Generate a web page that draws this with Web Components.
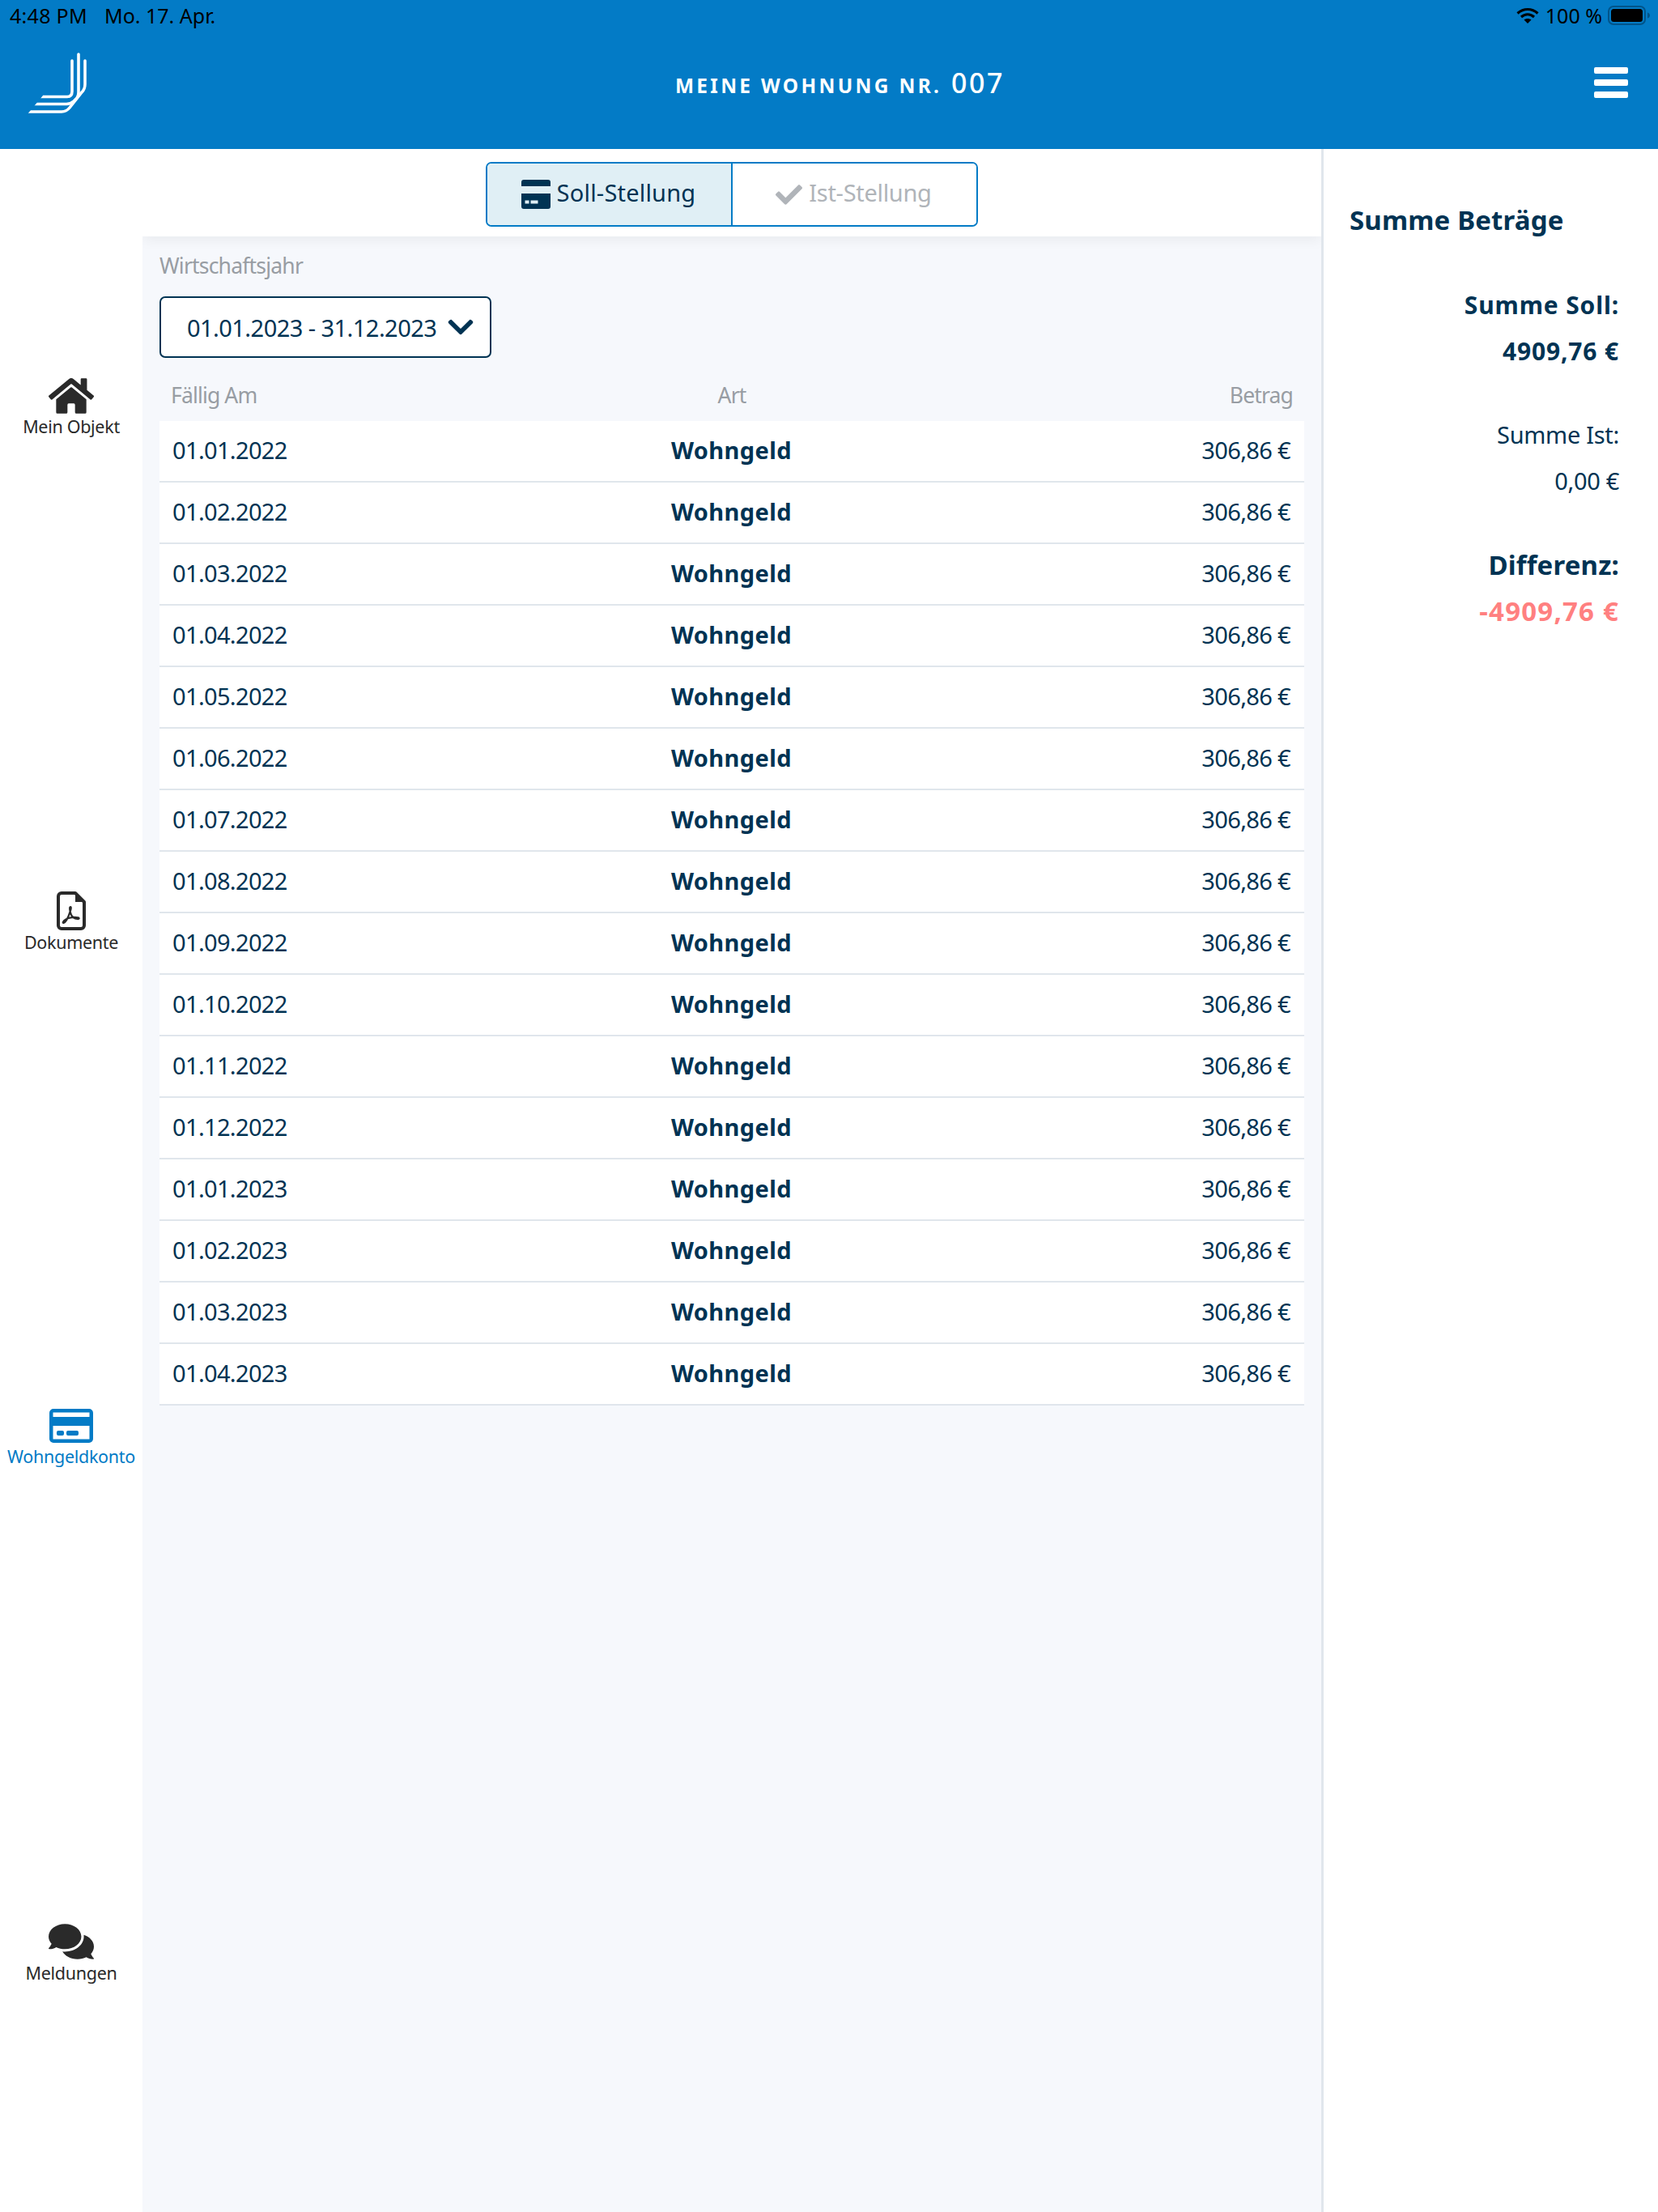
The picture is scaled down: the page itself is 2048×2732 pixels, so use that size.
<!DOCTYPE html>
<html lang="de">
<head>
<meta charset="utf-8">
<title>Meine Wohnung</title>
<style>
    html, body { margin: 0; padding: 0; }
    body {
        color: #003353;
        font-family: "Noto Sans", "Open Sans", sans-serif;
        height: 2732px;
        overflow: hidden;
        width: 2048px;
    }
</style>
</head>
<body>
<app-shell></app-shell>

<script>
const icons = {
    home: `<svg viewBox="0 0 576 512" width="56" height="50"><path fill="currentColor" d="M280.37 148.26L96 300.11V464a16 16 0 0 0 16 16l112.06-.29a16 16 0 0 0 15.92-16V368a16 16 0 0 1 16-16h64a16 16 0 0 1 16 16v95.64a16 16 0 0 0 16 16.05L464 480a16 16 0 0 0 16-16V300L295.67 148.26a12.19 12.19 0 0 0-15.3 0zM571.6 251.47L488 182.56V44.05a12 12 0 0 0-12-12h-56a12 12 0 0 0-12 12v72.61L318.47 43a48 48 0 0 0-61 0L4.34 251.47a12 12 0 0 0-1.6 16.9l25.5 31A12 12 0 0 0 45.15 301l235.22-193.74a12.19 12.19 0 0 1 15.3 0L530.9 301a12 12 0 0 0 16.9-1.6l25.5-31a12 12 0 0 0-1.7-16.93z"/></svg>`,
    pdf: `<svg viewBox="0 0 36 48" width="36" height="48"><path fill="none" stroke="currentColor" stroke-width="4" stroke-linejoin="round" d="M6 2h17l11 11v29a4 4 0 0 1-4 4H6a4 4 0 0 1-4-4V6a4 4 0 0 1 4-4z"/><path fill="currentColor" d="M23 2l11 11H23z"/><path fill="none" stroke="currentColor" stroke-width="2.2" stroke-linejoin="round" d="M17 19c-1.4 0-1 5 .8 9.500 1.500 3.500 3.600 5 7.700 5.500 2.300.3 3-1 1-1.600-4-1.100-11.300-.6-15.500 2.200-3.700 2.500-3.800 4.600-2.500 4.300 2.300-.6 5.800-6.600 8.100-14.200C17.600 22.500 18.300 19 17 19z"/></svg>`,
    card: `<svg viewBox="0 0 54 42" width="54" height="42"><path fill="currentColor" fill-rule="evenodd" d="M5 0h44a5 5 0 0 1 5 5v32a5 5 0 0 1-5 5H5a5 5 0 0 1-5-5V5a5 5 0 0 1 5-5zM4.500 4.500v5.500h45V4.500zM4.500 21v16.500h45V21z"/><rect fill="currentColor" x="9" y="27" width="9" height="6" rx="2"/><rect fill="currentColor" x="21" y="27" width="15" height="6" rx="2"/></svg>`,
    cardSolid: `<svg viewBox="0 0 36 36" width="36" height="36"><path fill="currentColor" fill-rule="evenodd" d="M3 0h30a3 3 0 0 1 3 3v5H0V3a3 3 0 0 1 3-3zM0 17h36v16a3 3 0 0 1-3 3H3a3 3 0 0 1-3-3zM4.500 25.500v4h5v-4zM11.500 25.500v4h9v-4z"/></svg>`,
    comments: `<svg viewBox="0 32 576 448" width="56" height="44"><path fill="currentColor" d="M416 192c0-88.400-93.100-160-208-160S0 103.600 0 192c0 34.300 14.100 65.900 38 92-13.400 30.200-35.500 54.200-35.800 54.500-2.200 2.300-2.800 5.700-1.500 8.700S4.800 352 8 352c36.600 0 66.900-12.300 88.700-25 32.200 15.700 70.300 25 111.300 25 114.900 0 208-71.600 208-160zm122 220c23.900-26 38-57.700 38-92 0-66.900-53.500-124.200-129.300-148.100.9 6.600 1.300 13.300 1.300 20.100 0 105.900-107.700 192-240 192-10.800 0-21.300-.8-31.700-1.900C207.800 439.600 281.800 480 368 480c41 0 79.100-9.200 111.300-25 21.800 12.700 52.100 25 88.700 25 3.200 0 6.100-1.900 7.300-4.800 1.300-2.900.7-6.300-1.500-8.700-.3-.3-22.400-24.200-35.800-54.500z"/></svg>`,
    check: `<svg viewBox="0 0 512 512" width="33" height="33"><path fill="currentColor" d="M173.898 439.404l-166.400-166.400c-9.997-9.997-9.997-26.206 0-36.204l36.203-36.204c9.997-9.998 26.207-9.998 36.204 0L192 312.690 432.095 72.596c9.997-9.997 26.207-9.997 36.204 0l36.203 36.204c9.997 9.997 9.997 26.206 0 36.204l-294.400 294.401c-9.998 9.997-26.207 9.997-36.204-.001z"/></svg>`,
    chevron: `<svg viewBox="0 0 448 512" width="32" height="36"><path fill="currentColor" d="M207.029 381.476L12.686 187.132c-9.373-9.373-9.373-24.569 0-33.941l22.667-22.667c9.357-9.357 24.522-9.375 33.901-.04L224 284.505l154.745-154.021c9.379-9.335 24.544-9.317 33.901.04l22.667 22.667c9.373 9.373 9.373 24.569 0 33.941L240.971 381.476c-9.373 9.372-24.569 9.372-33.942 0z"/></svg>`
}

class StatusBar extends HTMLElement {
    constructor () {
        super()
        this.attachShadow({mode: 'open'})
    }

    connectedCallback () {
        this.shadowRoot.innerHTML = `
            <style>
                :host {
                    align-items: center;
                    box-sizing: border-box;
                    color: #000;
                    display: flex;
                    font-size: 25px;
                    height: 40px;
                    padding: 0 10px 2px 12px;
                }
                .time { letter-spacing: 0.3px; }
                .date { margin-left: 21px; }
                .right {
                    align-items: center;
                    display: flex;
                    margin-left: auto;
                }
                .pct { margin: 0 7px 0 8px; }
            </style>
            <span class="time">4:48 PM</span>
            <span class="date">Mo. 17. Apr.</span>
            <div class="right">
                <svg viewBox="0 0 28 20" width="28" height="20"><path fill="none" stroke="#000" stroke-width="3.200" d="M1.500 7.500C9 .8 19 .8 26.500 7.500M6 12c5-4.300 11-4.300 16 0"/><path d="M14 20l-4.500-4.500c2.600-2 6.400-2 9 0z"/></svg>
                <span class="pct">100 %</span>
                <svg viewBox="0 0 52 24" width="52" height="24"><rect x="1" y="1" width="45" height="22" rx="6" fill="none" stroke="#01548a" stroke-width="2"/><rect x="4" y="4" width="39" height="16" rx="3.500"/><path d="M49 8.500c2 .5 3 2 3 3.500s-1 3-3 3.500z" fill="#01548a"/></svg>
            </div>
        `
    }
}

class AppHeader extends HTMLElement {
    constructor () {
        super()
        this.attachShadow({mode: 'open'})
    }

    connectedCallback () {
        this.shadowRoot.innerHTML = `
            <style>
                :host {
                    background: #037bc6;
                    display: block;
                    height: 184px;
                }
                .bar {
                    align-items: center;
                    color: #fff;
                    display: grid;
                    grid-template-columns: 1fr auto 1fr;
                    height: 128px;
                    padding: 0 37px 16px 25px;
                }
                .logo { display: block; }
                h1 {
                    font-size: 24.500px;
                    font-weight: 700;
                    letter-spacing: 3.300px;
                    margin: -5px 0 0 39px;
                    white-space: nowrap;
                }
                h1 b {
                    font-size: 34px;
                    font-weight: 500;
                    letter-spacing: 2.600px;
                    margin-left: 2px;
                }
                .burger {
                    display: flex;
                    flex-direction: column;
                    gap: 7px;
                    justify-self: end;
                    margin-top: -4px;
                    width: 42px;
                }
                .burger i {
                    background: #fff;
                    border-radius: 2px;
                    display: block;
                    height: 8px;
                }
            </style>
            <status-bar></status-bar>
            <div class="bar">
                <svg class="logo" viewBox="0 0 100 100" width="100" height="100">
                    <clipPath id="cut"><polygon points="28,0 100,0 100,100 8,88 28,64"/></clipPath>
                    <g clip-path="url(#cut)" fill="none" stroke="#fff" stroke-width="3.600" stroke-linecap="round">
                        <path d="M64 21V59Q64 65.500 58 65.500H0"/>
                        <path d="M72 13V60Q72 66 68 69L66 71Q62 74.500 57 74.500H0"/>
                        <path d="M80 21V50Q80 56 76 60L61 79Q57 84 51 84H0"/>
                    </g>
                </svg>
                <h1>MEINE WOHNUNG NR. <b>007</b></h1>
                <div class="burger"><i></i><i></i><i></i></div>
            </div>
        `
    }
}

class NavItem extends HTMLElement {
    constructor () {
        super()
        this.attachShadow({mode: 'open'})
    }

    connectedCallback () {
        const active = this.hasAttribute('active')
        this.shadowRoot.innerHTML = `
            <style>
                :host {
                    align-items: center;
                    color: ${active ? '#037bc6' : '#2a2a2a'};
                    display: flex;
                    flex: 1;
                    flex-direction: column;
                    font-size: 21.500px;
                    justify-content: center;
                    letter-spacing: -0.300px;
                    line-height: 30px;
                    white-space: nowrap;
                }
                .icon {
                    display: flex;
                    margin-bottom: var(--label-gap, 0);
                }
                .icon svg { display: block; }
            </style>
            <div class="icon">${icons[this.getAttribute('icon')]}</div>
            <slot></slot>
        `
    }
}

class SideNav extends HTMLElement {
    constructor () {
        super()
        this.attachShadow({mode: 'open'})
        this.shadowRoot.innerHTML = `
            <style>
                :host {
                    background: #fff;
                    display: flex;
                    flex-direction: column;
                    width: 176px;
                }
            </style>
            <slot></slot>
        `
    }
}

class ToggleGroup extends HTMLElement {
    constructor () {
        super()
        this.attachShadow({mode: 'open'})
        this.shadowRoot.innerHTML = `
            <style>
                :host {
                    border: 2px solid #037bc6;
                    border-radius: 7px;
                    box-sizing: border-box;
                    display: flex;
                    height: 80px;
                    overflow: hidden;
                    width: 608px;
                }
            </style>
            <slot></slot>
        `
    }
}

class ToggleButton extends HTMLElement {
    constructor () {
        super()
        this.attachShadow({mode: 'open'})
    }

    connectedCallback () {
        const active = this.hasAttribute('active')
        this.shadowRoot.innerHTML = `
            <style>
                :host {
                    align-items: center;
                    background: ${active ? '#e0eff5' : '#fff'};
                    border-right: ${active ? '2px solid #037bc6' : '0'};
                    box-sizing: border-box;
                    color: ${active ? '#003353' : '#b0b4b9'};
                    display: flex;
                    font-size: 29px;
                    gap: 8px;
                    justify-content: center;
                    letter-spacing: ${active ? '0.2px' : '-0.300px'};
                    padding-bottom: 5px;
                    width: ${active ? '303px' : '301px'};
                }
                svg { display: block; margin-left: -2px; margin-top: 5px; }
            </style>
            ${icons[this.getAttribute('icon')]}
            <span><slot></slot></span>
        `
    }
}

class YearSelect extends HTMLElement {
    constructor () {
        super()
        this.attachShadow({mode: 'open'})
        this.shadowRoot.innerHTML = `
            <style>
                :host {
                    align-items: center;
                    background: #fff;
                    border: 2px solid #003353;
                    border-radius: 7px;
                    box-sizing: border-box;
                    display: flex;
                    font-size: 29px;
                    height: 76px;
                    justify-content: space-between;
                    letter-spacing: -0.550px;
                    padding: 0 20px 0 32px;
                    white-space: nowrap;
                    width: 410px;
                }
                svg { display: block; }
            </style>
            <slot></slot>
            ${icons.chevron}
        `
    }
}

class BookingRow extends HTMLElement {
    constructor () {
        super()
        this.attachShadow({mode: 'open'})
    }

    connectedCallback () {
        this.shadowRoot.innerHTML = `
            <style>
                :host {
                    align-items: center;
                    background: #fff;
                    border-bottom: 2px solid #e0e6ec;
                    box-sizing: border-box;
                    display: grid;
                    font-size: 29px;
                    grid-template-columns: 1fr auto 1fr;
                    height: 76px;
                    letter-spacing: -0.650px;
                    padding: 0 17px 3px 16px;
                }
                .art {
                    font-weight: 700;
                    letter-spacing: 0.400px;
                }
                .amount { text-align: right; }
            </style>
            <span>${this.getAttribute('date')}</span>
            <span class="art">Wohngeld</span>
            <span class="amount">306,86 €</span>
        `
    }
}

class BookingTable extends HTMLElement {
    constructor () {
        super()
        this.attachShadow({mode: 'open'})
        this.shadowRoot.innerHTML = `
            <style>
                :host { display: block; }
                .head {
                    color: #989da3;
                    display: grid;
                    font-size: 26.500px;
                    grid-template-columns: 1fr auto 1fr;
                    letter-spacing: -0.850px;
                    line-height: 36px;
                    padding: 0 14px 14px 14px;
                }
                .head span:last-child { text-align: right; }
            </style>
            <div class="head"><span>Fällig Am</span><span>Art</span><span>Betrag</span></div>
            <slot></slot>
        `
    }
}

class SumPanel extends HTMLElement {
    constructor () {
        super()
        this.attachShadow({mode: 'open'})
        this.shadowRoot.innerHTML = `
            <style>
                :host {
                    background: #fff;
                    border-left: 3px solid #e0e6ec;
                    box-sizing: border-box;
                    display: flex;
                    flex-direction: column;
                    padding: 0 48px 0 32px;
                    width: 416px;
                }
                h2 {
                    font-size: 33px;
                    font-weight: 700;
                    letter-spacing: 0.150px;
                    line-height: 44px;
                    margin: 66px 0 0;
                }
                .lines { padding-top: 54px; }
            </style>
            <h2>Summe Beträge</h2>
            <div class="lines"><slot></slot></div>
        `
    }
}

class SumLine extends HTMLElement {
    constructor () {
        super()
        this.attachShadow({mode: 'open'})
        this.shadowRoot.innerHTML = `
            <style>
                :host {
                    display: block;
                    font-size: 29px;
                    letter-spacing: -0.300px;
                    line-height: 57px;
                    text-align: right;
                }
                :host([bold]) {
                    font-size: 30px;
                    font-weight: 700;
                    letter-spacing: 0.850px;
                }
                :host([large]) {
                    font-size: 33px;
                    letter-spacing: 0.150px;
                }
                :host([alert]) {
                    color: #ff8080;
                    letter-spacing: 1.200px;
                }
            </style>
            <slot></slot>
        `
    }
}

class MainArea extends HTMLElement {
    constructor () {
        super()
        this.attachShadow({mode: 'open'})
        this.shadowRoot.innerHTML = `
            <style>
                :host {
                    background: #f6f8fc;
                    display: flex;
                    flex: 1;
                    flex-direction: column;
                    overflow: hidden;
                }
                .top {
                    background: #fff;
                    box-shadow: 0 4px 16px rgba(0, 0, 0, 0.06);
                    box-sizing: border-box;
                    display: flex;
                    height: 108px;
                    justify-content: center;
                    padding-top: 16px;
                }
                .body { padding: 18px 21px 0; }
                .label {
                    color: #989da3;
                    font-size: 26.500px;
                    letter-spacing: -0.800px;
                    line-height: 36px;
                    margin-bottom: 20px;
                }
                .select { margin-bottom: 28px; display: flex; }
            </style>
            <div class="top"><slot name="toggle"></slot></div>
            <div class="body">
                <div class="label">Wirtschaftsjahr</div>
                <div class="select"><slot name="select"></slot></div>
                <slot></slot>
            </div>
        `
    }
}

class AppShell extends HTMLElement {
    constructor () {
        super()
        this.attachShadow({mode: 'open'})
    }

    connectedCallback () {
        const dates = ['01.01.2022', '01.02.2022', '01.03.2022', '01.04.2022', '01.05.2022', '01.06.2022', '01.07.2022', '01.08.2022', '01.09.2022', '01.10.2022', '01.11.2022', '01.12.2022', '01.01.2023', '01.02.2023', '01.03.2023', '01.04.2023']

        this.shadowRoot.innerHTML = `
            <style>
                :host {
                    display: flex;
                    flex-direction: column;
                    height: 2732px;
                }
                .content {
                    display: flex;
                    flex: 1;
                    min-height: 0;
                }
            </style>
            <app-header></app-header>
            <div class="content">
                <side-nav>
                    <nav-item icon="home" style="--label-gap: -2px">Mein Objekt</nav-item>
                    <nav-item icon="pdf">Dokumente</nav-item>
                    <nav-item icon="card" active style="--label-gap: 2px">Wohngeldkonto</nav-item>
                    <nav-item icon="comments" style="--label-gap: 2px">Meldungen</nav-item>
                </side-nav>
                <main-area>
                    <toggle-group slot="toggle">
                        <toggle-button icon="cardSolid" active>Soll-Stellung</toggle-button>
                        <toggle-button icon="check">Ist-Stellung</toggle-button>
                    </toggle-group>
                    <year-select slot="select">01.01.2023 - 31.12.2023</year-select>
                    <booking-table>
                        ${dates.map(date => `<booking-row date="${date}"></booking-row>`).join('')}
                    </booking-table>
                </main-area>
                <sum-panel>
                    <sum-line bold>Summe Soll:</sum-line>
                    <sum-line bold>4909,76 €</sum-line>
                    <sum-line style="margin-top: 46px">Summe Ist:</sum-line>
                    <sum-line>0,00 €</sum-line>
                    <sum-line bold large style="margin-top: 47px">Differenz:</sum-line>
                    <sum-line bold large alert>-4909,76 €</sum-line>
                </sum-panel>
            </div>
        `
    }
}

window.customElements.define('status-bar', StatusBar)
window.customElements.define('app-header', AppHeader)
window.customElements.define('nav-item', NavItem)
window.customElements.define('side-nav', SideNav)
window.customElements.define('toggle-group', ToggleGroup)
window.customElements.define('toggle-button', ToggleButton)
window.customElements.define('year-select', YearSelect)
window.customElements.define('booking-row', BookingRow)
window.customElements.define('booking-table', BookingTable)
window.customElements.define('sum-panel', SumPanel)
window.customElements.define('sum-line', SumLine)
window.customElements.define('main-area', MainArea)
window.customElements.define('app-shell', AppShell)
</script>
</body>
</html>
